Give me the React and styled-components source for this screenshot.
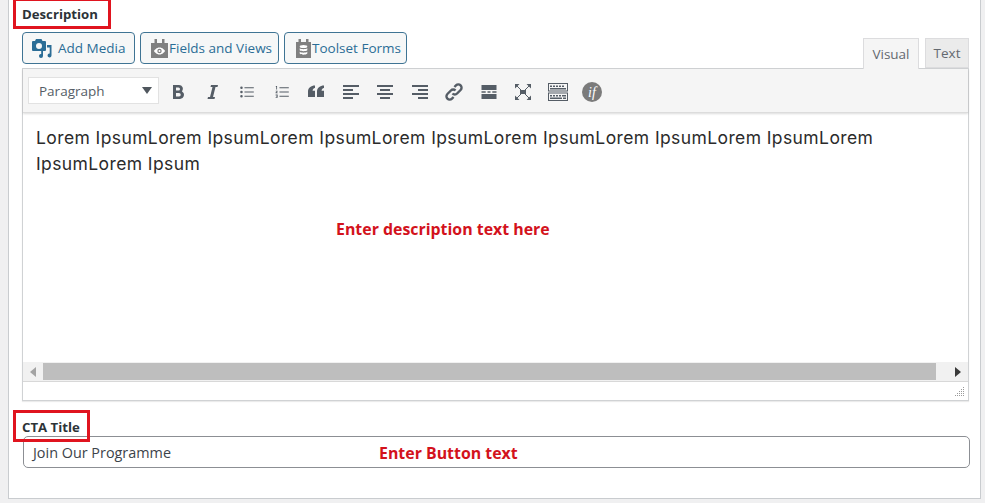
import React from 'react';
import styled, { createGlobalStyle } from 'styled-components';

const GlobalStyle = createGlobalStyle`
  html, body {
    margin: 0;
    height: 503px;
    overflow: hidden;
    background: #f0f0f1;
    font-family: "Open Sans", "Liberation Sans", sans-serif;
  }
`;

const Panel = styled.div`
  box-sizing: border-box;
  width: 973px;
  height: 499px;
  margin-left: 8px;
  padding-left: 13px;
  background: #fff;
  border: 1px solid #c9cccf;
  border-top: 0;
`;

const LabelRow = styled.div`
  position: relative;
  box-sizing: border-box;
  display: flex;
  align-items: center;
  height: ${(p) => p.$height}px;
  padding: ${(p) => p.$padTop || 0}px 0 ${(p) => p.$padBottom || 0}px;
`;

const Label = styled.label`
  font-size: 13.2px;
  font-weight: 700;
  color: #2c3338;
`;

const RedBox = styled.span`
  position: absolute;
  z-index: 2;
  left: -9px;
  top: ${(p) => p.$top}px;
  width: ${(p) => p.$width}px;
  height: ${(p) => p.$height}px;
  box-sizing: border-box;
  border: 3px solid #e0141f;
  pointer-events: none;
`;

const EditorHeader = styled.div`
  display: flex;
  justify-content: space-between;
  align-items: flex-start;
  width: 947px;
  height: 36px;
`;

const MediaButtons = styled.div`
  display: flex;
  gap: 5px;
`;

const MediaButton = styled.button`
  display: flex;
  align-items: center;
  box-sizing: border-box;
  height: 32px;
  width: ${(p) => p.$width}px;
  padding: 0 0 0 ${(p) => p.$pad}px;
  gap: ${(p) => p.$gap}px;
  font-family: inherit;
  font-size: 13.5px;
  color: #2b6d96;
  background: #f6f7f7;
  border: 1px solid #3f7494;
  border-radius: 4px;
  white-space: nowrap;
`;

const Tabs = styled.div`
  display: flex;
  align-items: flex-start;
  gap: 6px;
  padding-top: 6px;
  z-index: 1;
`;

const Tab = styled.div`
  box-sizing: border-box;
  width: ${(p) => p.$width}px;
  height: ${(p) => (p.$active ? 31 : 30)}px;
  display: flex;
  align-items: center;
  justify-content: center;
  font-size: 13.5px;
  color: #646970;
  background: ${(p) => (p.$active ? '#f5f5f5' : '#ebebeb')};
  border: 1px solid #dcdcde;
  border-bottom: ${(p) => (p.$active ? '0' : '1px solid #dcdcde')};
`;

const EditorBox = styled.div`
  box-sizing: border-box;
  width: 947px;
  height: 333px;
  display: flex;
  flex-direction: column;
  border: 1px solid #d0d2d4;
  box-shadow: 0 1px 1px rgba(0, 0, 0, 0.08);
`;

const Toolbar = styled.div`
  box-sizing: border-box;
  flex: 0 0 44px;
  display: flex;
  align-items: center;
  padding-left: 5px;
  background: #f5f5f5;
  border-bottom: 1px solid #dcdcdc;
  box-shadow: 0 1px 2px rgba(0, 0, 0, 0.14);
`;

const FormatSelect = styled.div`
  box-sizing: border-box;
  width: 131px;
  height: 27px;
  display: flex;
  align-items: center;
  justify-content: space-between;
  padding: 0 6px 0 10px;
  margin-right: 2px;
  background: #fff;
  border: 1px solid #e2e2e2;
  font-size: 13.5px;
  color: #555d66;
`;

const Caret = styled.span`
  width: 0;
  height: 0;
  border-left: 5px solid transparent;
  border-right: 5px solid transparent;
  border-top: 7px solid #50575e;
`;

const ToolButton = styled.span`
  width: 34.5px;
  height: 30px;
  margin-top: 2px;
  display: flex;
  align-items: center;
  justify-content: center;
  color: #555d66;
`;

const Content = styled.div`
  position: relative;
  flex: 1;
  padding: 12px 13px 0;
  font-family: Inter, "Open Sans", sans-serif;
  font-size: 17.5px;
  letter-spacing: 0.4px;
  line-height: 26px;
  color: #2b2b2b;
`;

const Note = styled.span`
  position: absolute;
  left: ${(p) => p.$left}px;
  top: ${(p) => p.$top}px;
  font-family: "Open Sans", sans-serif;
  font-size: 15.9px;
  font-weight: 700;
  letter-spacing: 0;
  line-height: 22px;
  color: #d3121c;
  white-space: nowrap;
`;

const Scrollbar = styled.div`
  flex: 0 0 20px;
  display: flex;
  background: #f1f1f1;
  border-bottom: 1px solid #d8d8d8;
  box-sizing: border-box;
`;

const ScrollArrow = styled.span`
  flex: 0 0 20px;
  display: flex;
  align-items: center;
  justify-content: center;
  &::before {
    content: '';
    border-top: 5px solid transparent;
    border-bottom: 5px solid transparent;
    ${(p) => (p.$right ? 'border-left: 6px solid #3a3a3a;' : 'border-right: 6px solid #a3a3a3;')}
  }
`;

const ScrollThumb = styled.span`
  flex: 1;
  height: 17px;
  margin: 1px 12px 0 0;
  background: #bebebe;
`;

const StatusBar = styled.div`
  box-sizing: border-box;
  flex: 0 0 18px;
  display: flex;
  justify-content: flex-end;
  align-items: flex-end;
  padding: 0 3px 3px 0;
  background: #fff;
`;

const InputField = styled.div`
  box-sizing: border-box;
  position: relative;
  width: 947px;
  height: 32px;
  margin-left: 1px;
  display: flex;
  align-items: center;
  padding-left: 9px;
  font-size: 14.4px;
  color: #3c434a;
  background: #fff;
  border: 1px solid #8c8f94;
  border-radius: 5px;
`;

const MediaIcon = () => (
  <svg width="20" height="20" viewBox="0 0 20 20" fill="#2b6d96">
    <path fillRule="evenodd" d="M4 1h5.500l1 2H13a1 1 0 0 1 1 1v8a1 1 0 0 1-1 1H1a1 1 0 0 1-1-1V4a1 1 0 0 1 1-1h2zM7 5a3 3 0 1 0 0 6 3 3 0 0 0 0-6z" />
    <path d="M15 7h4.500v10.500a2 2 0 1 1-1.800-2V9.500H15z" />
    <path d="M11 13v5a2 2 0 1 1-1.800-2v-3z" />
  </svg>
);

const FieldsIcon = () => (
  <svg width="17" height="20" viewBox="0 0 17 20">
    <path fill="#808080" d="M3.500 1h2.500v4h5V1h2.500v4H17v15H0V5h3.500z" />
    <path fill="#fff" d="M8.500 9.500c3 0 5 2.600 5.500 3.500-.5.900-2.500 3.500-5.500 3.500S3.500 13.900 3 13c.5-.9 2.500-3.500 5.500-3.500z" />
    <circle cx="8.500" cy="13" r="2.200" fill="#808080" />
    <circle cx="8.500" cy="13" r="1" fill="#fff" />
  </svg>
);

const FormsIcon = () => (
  <svg width="15" height="20" viewBox="0 0 15 20">
    <path fill="#808080" d="M2.500 1h2.500v3h5V1h2.500v3H15v16H0V4h2.500z" />
    <ellipse cx="7.500" cy="8.500" rx="3.800" ry="1.500" fill="#fff" />
    <path fill="#fff" d="M3.700 10.300c1.500 1.200 6.100 1.200 7.600 0v2c-1.500 1.200-6.100 1.200-7.600 0zM3.700 13.800c1.500 1.200 6.100 1.200 7.600 0v1.800c-1.500 1.600-6.100 1.600-7.600 0z" />
  </svg>
);

const Icon = ({ children }) => (
  <svg width="20" height="20" viewBox="0 0 20 20" fill="currentColor">{children}</svg>
);

const toolbarIcons = [
  <path key="b" d="M5 3h6a4 4 0 0 1 3 6.600A4 4 0 0 1 11.500 17H5zm3 2.500v3h2.500a1.500 1.500 0 0 0 0-3zm0 5.500v3.500h3a1.750 1.750 0 0 0 0-3.500z" />,
  <path key="i" d="M8 3h7l-.5 2h-2l-2.500 10h2l-.5 2H4.500l.5-2h2L9.500 5h-2z" />,
  <path key="ul" transform="translate(1.500 1.500) scale(.85)" d="M3.500 3.500a1.500 1.500 0 1 1 0 3 1.500 1.500 0 0 1 0-3zm0 5a1.500 1.500 0 1 1 0 3 1.500 1.500 0 0 1 0-3zm0 5a1.500 1.500 0 1 1 0 3 1.500 1.500 0 0 1 0-3zM7 4.500h11v1H7zm0 5h11v1H7zm0 5h11v1H7z" />,
  <path key="ol" transform="translate(1.500 1.500) scale(.85)" d="M3 3h1.200v4H3.200V4H2.500zM2.500 8.500h2.300v.9L3.600 10.700h1.300v.8H2.400v-.8l1.400-1.500H2.500zM2.500 13h2.400v3.800H2.500V16h1.400v-.7H3v-.7h.9V14H2.500zM7 4.500h11v1H7zm0 5h11v1H7zm0 5h11v1H7z" />,
  <path key="q" d="M9 3.500v2.600C7.500 6.400 6.600 7.500 6.600 8.800H9V15H2V9.500C2 6 5 3.500 9 3.500zm9 0v2.600c-1.500.3-2.400 1.400-2.400 2.700H18V15h-7V9.500c0-3.500 3-6 7-6z" />,
  <path key="al" d="M2 3h16v2H2zm0 4h10v2H2zm0 4h16v2H2zm0 4h10v2H2z" />,
  <path key="ac" d="M2 3h16v2H2zm3 4h10v2H5zm-3 4h16v2H2zm3 4h10v2H5z" />,
  <path key="ar" d="M2 3h16v2H2zm6 4h10v2H8zm-6 4h16v2H2zm6 4h10v2H8z" />,
  <g key="link" fill="none" stroke="currentColor" strokeWidth="2.400">
    <path d="M8.500 11.500a3.200 3.200 0 0 0 4.600 0l3.500-3.500a3.250 3.250 0 0 0-4.600-4.600L10.400 5" />
    <path d="M11.500 8.500a3.200 3.200 0 0 0-4.600 0l-3.500 3.500a3.250 3.250 0 0 0 4.600 4.600L9.600 15" />
  </g>,
  <path key="hr" d="M2.500 3h15v5h-15zm0 6.200h4.200v1.600H2.500zm6 0h3v1.600h-3zm4.800 0h4.200v1.600h-4.200zM2.500 12h15v5h-15z" />,
  <g key="fs">
    <rect x="7" y="8" width="6" height="4" />
    <path d="M2 2h4.500L2 6.500zM18 2v4.500L13.500 2zM2 18v-4.500L6.500 18zM18 18h-4.500L18 13.500z" />
    <path d="M4 4l4 4M16 4l-4 4M4 16l4-4M16 16l-4-4" stroke="currentColor" strokeWidth="1" />
  </g>,
  <path key="kb" fillRule="evenodd" d="M0 1h20v8.500H0zm1 1v6.500h18V2zM0 10.500h20V19H0zm1 1V18h18v-6.500zM2 3.500h2V5H2zm3 0h2V5H5zm3 0h2V5H8zm3 0h2V5h-2zm3 0h2V5h-2zM2 6h16v1.500H2zm0 7h2v1.500H2zm3 0h2v1.500H5zm3 0h2v1.500H8zm3 0h2v1.500h-2zm3 0h4v1.500h-4zM2 15.500h12V17H2zm13 0h3V17h-3z" />,
];

const IfIcon = () => (
  <svg width="20" height="20" viewBox="0 0 20 20">
    <circle cx="10" cy="10" r="10" fill="#7b7b7b" />
    <text x="10" y="14.500" textAnchor="middle" fontFamily="Liberation Serif, serif" fontStyle="italic" fontSize="14" fill="#fff">if</text>
  </svg>
);

const Grip = () => (
  <svg width="10" height="10" viewBox="0 0 10 10" fill="#9a9a9a">
    <rect x="8" y="0" width="1" height="1" /><rect x="8" y="2" width="1" height="1" /><rect x="8" y="4" width="1" height="1" />
    <rect x="8" y="6" width="1" height="1" /><rect x="8" y="8" width="1" height="1" /><rect x="6" y="2" width="1" height="1" />
    <rect x="6" y="4" width="1" height="1" /><rect x="6" y="6" width="1" height="1" /><rect x="6" y="8" width="1" height="1" />
    <rect x="4" y="4" width="1" height="1" /><rect x="4" y="6" width="1" height="1" /><rect x="4" y="8" width="1" height="1" />
    <rect x="2" y="6" width="1" height="1" /><rect x="2" y="8" width="1" height="1" /><rect x="0" y="8" width="1" height="1" />
  </svg>
);

const loremLine = 'Lorem Ipsum'.repeat(9);

const App = () => {
  return (
    <>
      <GlobalStyle />
      <Panel>
        <LabelRow $height={32} $padBottom={4}>
          <Label>Description</Label>
          <RedBox $top={-2} $width={98} $height={31} />
        </LabelRow>
        <EditorHeader>
          <MediaButtons>
            <MediaButton $width={113} $pad={9} $gap={6}><MediaIcon />Add Media</MediaButton>
            <MediaButton $width={139} $pad={10} $gap={1}><FieldsIcon />Fields and Views</MediaButton>
            <MediaButton $width={123} $pad={11} $gap={1}><FormsIcon />Toolset Forms</MediaButton>
          </MediaButtons>
          <Tabs>
            <Tab $active $width={56}>Visual</Tab>
            <Tab $width={44}>Text</Tab>
          </Tabs>
        </EditorHeader>
        <EditorBox>
          <Toolbar>
            <FormatSelect>Paragraph<Caret /></FormatSelect>
            {toolbarIcons.map((icon) => (
              <ToolButton key={icon.key}><Icon>{icon}</Icon></ToolButton>
            ))}
            <ToolButton><IfIcon /></ToolButton>
          </Toolbar>
          <Content>
            {loremLine}
            <Note $left={313} $top={105}>Enter description text here</Note>
          </Content>
          <Scrollbar>
            <ScrollArrow />
            <ScrollThumb />
            <ScrollArrow $right />
          </Scrollbar>
          <StatusBar><Grip /></StatusBar>
        </EditorBox>
        <LabelRow $height={35} $padTop={17}>
          <Label>CTA Title</Label>
          <RedBox $top={9} $width={77} $height={32} />
        </LabelRow>
        <InputField>
          Join Our Programme
          <Note $left={355} $top={5}>Enter Button text</Note>
        </InputField>
      </Panel>
    </>
  );
};

export default App;
